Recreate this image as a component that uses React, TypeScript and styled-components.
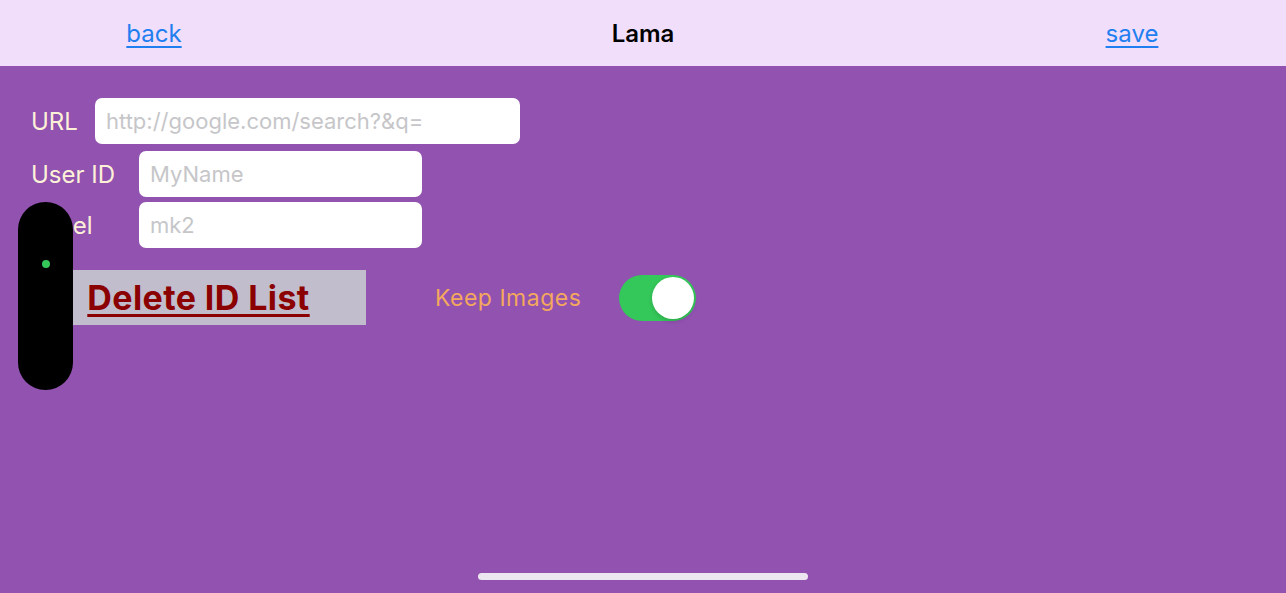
import React from 'react'
import styled, { createGlobalStyle } from 'styled-components'

const GlobalStyle = createGlobalStyle`
  html, body {
    margin: 0;
    padding: 0;
    height: 100%;
    overflow: hidden;
  }
  body {
    font-family: Inter, "Noto Sans", "Liberation Sans", sans-serif;
  }
`

const StyledScreen = styled.div`
  position: relative;
  width: 1286px;
  height: 593px;
  display: flex;
  flex-direction: column;
  background-color: #9152b0;
  overflow: hidden;
`

const StyledHeader = styled.div`
  height: 66px;
  flex-shrink: 0;
  display: grid;
  grid-template-columns: 308px 1fr 308px;
  align-items: center;
  background-color: #f0defa;
  box-sizing: border-box;
`

const NavLink = styled.a`
  justify-self: center;
  color: #1f7ff0;
  font-size: 24px;
  text-decoration: underline;
  text-underline-offset: 4px;
  text-decoration-thickness: 1.5px;
  cursor: pointer;
`

const Title = styled.div`
  justify-self: center;
  font-size: 24px;
  font-weight: 600;
  color: #000;
`

const StyledForm = styled.div`
  display: flex;
  flex-direction: column;
  padding: 32px 31px 0;
`

const FieldRow = styled.div<{ $gap: number }>`
  display: flex;
  align-items: center;
  margin-bottom: ${(p) => p.$gap}px;
`

const FieldLabel = styled.label<{ $width: number }>`
  width: ${(p) => p.$width}px;
  flex-shrink: 0;
  font-size: 24px;
  color: #fdf1d8;
`

const TextInput = styled.input<{ $width: number }>`
  width: ${(p) => p.$width}px;
  height: 46px;
  box-sizing: border-box;
  border: none;
  outline: none;
  border-radius: 7px;
  background: #fff;
  padding: 0 11px;
  font-family: inherit;
  font-size: 22px;
  color: #333;
  &::placeholder {
    color: #c6c6c9;
  }
`

const ActionRow = styled.div`
  display: flex;
  align-items: center;
  margin-top: 22px;
`

const DeleteButton = styled.button`
  width: 335px;
  height: 55px;
  border: none;
  border-radius: 0;
  background-color: #c1bdcc;
  font-family: inherit;
  font-size: 34px;
  font-weight: 700;
  letter-spacing: 0.4px;
  color: #8b0000;
  text-decoration: underline;
  text-underline-offset: 4px;
  text-decoration-thickness: 3px;
  cursor: pointer;
  padding: 0;
`

const SwitchLabel = styled.span`
  margin-left: 69px;
  font-size: 23px;
  letter-spacing: 0.5px;
  color: #f3a85e;
`

const SwitchTrack = styled.div<{ $on: boolean }>`
  margin-left: 38px;
  width: 77px;
  height: 46px;
  border-radius: 23px;
  background-color: ${(p) => (p.$on ? '#34c759' : '#e5e5ea')};
  display: flex;
  align-items: center;
  justify-content: ${(p) => (p.$on ? 'flex-end' : 'flex-start')};
  padding: 2px;
  box-sizing: border-box;
  cursor: pointer;
`

const SwitchKnob = styled.div`
  width: 42px;
  height: 42px;
  border-radius: 50%;
  background: #fff;
  box-shadow: 0 2px 4px rgba(0, 0, 0, 0.15);
`

const CameraIsland = styled.div`
  position: absolute;
  left: 18px;
  top: 202px;
  width: 55px;
  height: 188px;
  border-radius: 28px;
  background: #000;
  display: flex;
  justify-content: center;
  padding-top: 58px;
  box-sizing: border-box;
`

const CameraDot = styled.div`
  width: 8px;
  height: 8px;
  border-radius: 50%;
  background: #34c759;
`

const HomeIndicator = styled.div`
  position: absolute;
  left: 478px;
  bottom: 13px;
  width: 330px;
  height: 7px;
  border-radius: 4px;
  background: #ece6f0;
`

const App = () => {
  const [keepImages, setKeepImages] = React.useState(true)

  return (
    <>
      <GlobalStyle />
      <StyledScreen>
        <StyledHeader>
          <NavLink>back</NavLink>
          <Title>Lama</Title>
          <NavLink>save</NavLink>
        </StyledHeader>
        <StyledForm>
          <FieldRow $gap={7}>
            <FieldLabel $width={64}>URL</FieldLabel>
            <TextInput $width={425} placeholder="http://google.com/search?&q=" />
          </FieldRow>
          <FieldRow $gap={5}>
            <FieldLabel $width={108}>User ID</FieldLabel>
            <TextInput $width={283} placeholder="MyName" />
          </FieldRow>
          <FieldRow $gap={0}>
            <FieldLabel $width={108}>Label</FieldLabel>
            <TextInput $width={283} placeholder="mk2" />
          </FieldRow>
          <ActionRow>
            <DeleteButton>Delete ID List</DeleteButton>
            <SwitchLabel>Keep Images</SwitchLabel>
            <SwitchTrack $on={keepImages} onClick={() => setKeepImages(!keepImages)}>
              <SwitchKnob />
            </SwitchTrack>
          </ActionRow>
        </StyledForm>
        <CameraIsland>
          <CameraDot />
        </CameraIsland>
        <HomeIndicator />
      </StyledScreen>
    </>
  )
}

export default App
